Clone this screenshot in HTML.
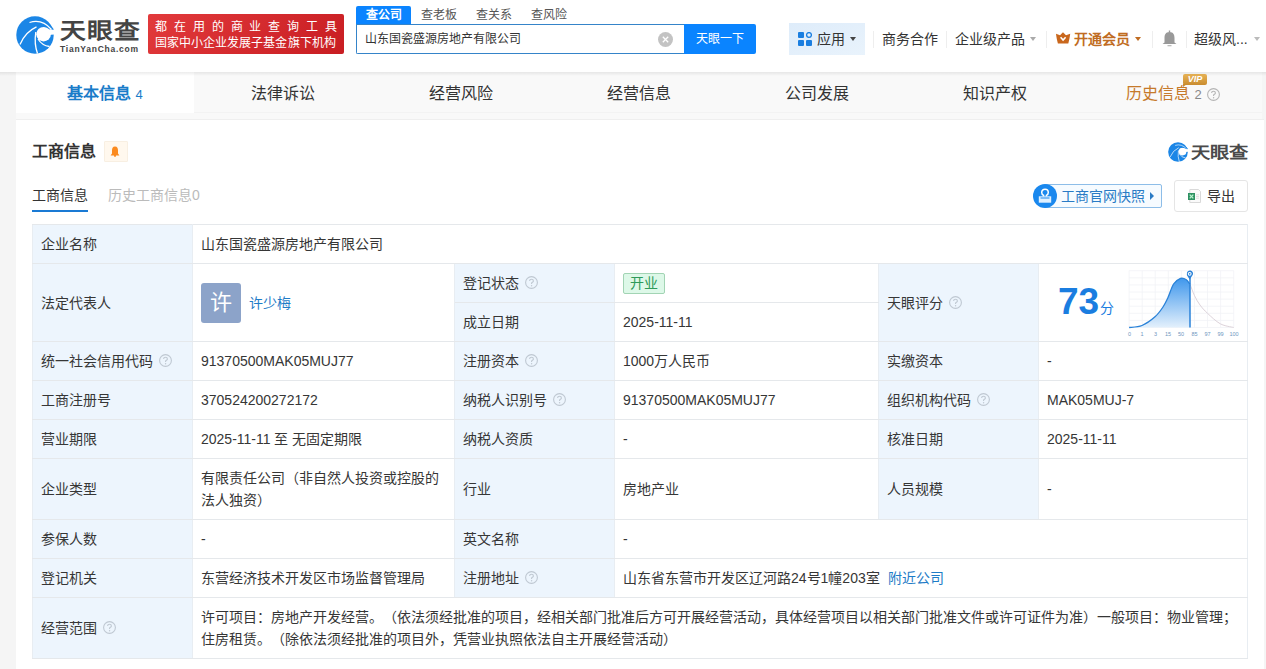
<!DOCTYPE html>
<html lang="zh-CN"><head><meta charset="utf-8">
<style>
*{margin:0;padding:0;box-sizing:border-box}
html,body{text-spacing-trim:space-all;width:1266px;height:669px;overflow:hidden;background:#f5f5f5;font-family:"Liberation Sans",sans-serif;color:#333}
.a{position:absolute;white-space:nowrap}
#hdr{position:absolute;left:0;top:0;width:1266px;height:72px;background:#fff}
#tabs{position:absolute;left:16px;top:72px;width:1246px;height:47px;background:#f9f9f9}
.tab{position:absolute;top:0;height:41px;width:178px;text-align:center;font-size:16px;line-height:44px;color:#333;overflow:hidden}
#card{position:absolute;left:16px;top:119px;width:1248px;height:560px;background:#fff;border-top:1px solid #efefef}
table{position:absolute;left:32px;top:224px;border-collapse:collapse;table-layout:fixed}
td{border:1px solid #e5e8eb;border-left-color:#e8edf2;border-right-color:#e8edf2;font-size:14px;color:#363636;padding:0 8px;vertical-align:middle;height:39px;line-height:22px}
td.l{background:#edf5fd}
.q{display:inline-block;width:13px;height:13px;vertical-align:-1px;margin-left:6px}
.sep{position:absolute;top:31px;width:1px;height:17px;background:#eee}
.caret{position:absolute;width:0;height:0;border-left:3.5px solid transparent;border-right:3.5px solid transparent;border-top:4px solid #555}
</style></head><body>
<svg width="0" height="0" style="position:absolute"><defs><g id="logo">
  <circle cx="19" cy="19" r="18.7" fill="#1b86e6"/>
  <circle cx="27.6" cy="18.2" r="7.3" fill="#fff"/>
  <path d="M30 14 L39 12.5 L39 18.5 L32 19 Z" fill="#fff"/>
  <path d="M22 11.5 Q30 9 36 13.8 L38 13.5 Q33 6 24 7.5 Z" fill="#1b86e6"/>
  <path d="M13.5 6.5 Q26 2.5 35.5 13.5" stroke="#fff" stroke-width="1.2" fill="none"/>
  <path d="M4 28.5 Q9 16 20.5 10.8" stroke="#fff" stroke-width="1.3" fill="none"/>
  <path d="M19.8 16 Q18 28 21.5 37.5" stroke="#fff" stroke-width="1.3" fill="none"/>
  <path d="M22 23 Q26 29.5 33.5 30.5" stroke="#fff" stroke-width="1.3" fill="none"/>
</g></defs></svg>
<div id="hdr">
  <svg class="a" style="left:16px;top:16px" width="38" height="38" viewBox="0 0 38 38"><use href="#logo"/></svg>
  <div class="a" style="left:59.5px;top:17.5px;font-size:22px;line-height:26px;font-weight:bold;color:#444;letter-spacing:1px;transform:scaleX(1.17);transform-origin:0 0">天眼查</div>
  <div class="a" style="left:60px;top:44px;font-size:8.5px;line-height:11px;font-weight:bold;color:#444;letter-spacing:0.75px">TianYanCha.com</div>
  <div class="a" style="left:148px;top:14px;width:196px;height:40px;border-radius:2px;background:linear-gradient(135deg,#e23a3c,#c81d22)">
    <div class="a" style="left:7px;top:4.5px;font-size:12px;line-height:16px;color:#fff;font-weight:500;letter-spacing:6.9px">都在用的商业查询工具</div>
    <div class="a" style="left:7px;top:21px;font-size:12px;line-height:16px;color:#fff;font-weight:500;letter-spacing:0.05px">国家中小企业发展子基金旗下机构</div>
  </div>
  <div class="a" style="left:356px;top:6px;width:55px;height:18px;background:#0a84ff;border-radius:2px 2px 0 0;color:#fff;font-size:12px;font-weight:bold;line-height:18px;text-align:center">查公司</div>
  <div class="a" style="left:421px;top:6px;font-size:12px;line-height:18px;color:#555">查老板</div>
  <div class="a" style="left:476px;top:6px;font-size:12px;line-height:18px;color:#555">查关系</div>
  <div class="a" style="left:531px;top:6px;font-size:12px;line-height:18px;color:#555">查风险</div>
  <div class="a" style="left:356px;top:24px;width:330px;height:30px;border:1px solid #3584c9;border-right:none;border-radius:0 0 0 2px;background:#fff"></div>
  <div class="a" style="left:365px;top:30px;font-size:12px;line-height:18px;color:#333">山东国瓷盛源房地产有限公司</div>
  <div class="a" style="left:657.5px;top:31.5px;width:15px;height:15px;border-radius:50%;background:#c3c3c3"></div>
  <svg class="a" style="left:657.5px;top:31.5px" width="15" height="15"><path d="M4.8 4.8L10.2 10.2M10.2 4.8L4.8 10.2" stroke="#fff" stroke-width="1.3"/></svg>
  <div class="a" style="left:684px;top:24px;width:72px;height:30px;background:#0a84ff;border-radius:0 2px 2px 0;color:#fff;font-size:12px;line-height:30px;text-align:center">天眼一下</div>

  <div class="a" style="left:789px;top:23px;width:76px;height:32px;background:linear-gradient(160deg,#deecfa,#e9f3fc)"></div>
  <svg class="a" style="left:798px;top:32px" width="14" height="14" viewBox="0 0 14 14">
    <rect x="0" y="0" width="6" height="6" rx="1" fill="#1a7ee0"/>
    <circle cx="11" cy="3" r="2.4" fill="none" stroke="#1a7ee0" stroke-width="1.3"/>
    <rect x="0" y="8" width="6" height="6" rx="1" fill="#1a7ee0"/>
    <rect x="8" y="8" width="6" height="6" rx="1" fill="#1a7ee0"/>
  </svg>
  <div class="a" style="left:817px;top:30px;font-size:14px;line-height:18px;color:#333">应用</div>
  <div class="caret" style="left:850px;top:37px;border-top-color:#444"></div>
  <div class="sep" style="left:873px"></div>
  <div class="a" style="left:882px;top:30px;font-size:14px;line-height:18px;color:#333">商务合作</div>
  <div class="sep" style="left:946px"></div>
  <div class="a" style="left:955px;top:30px;font-size:14px;line-height:18px;color:#333">企业级产品</div>
  <div class="caret" style="left:1030px;top:37px;border-top-color:#aaa"></div>
  <div class="sep" style="left:1046px"></div>
  <svg class="a" style="left:1056px;top:32px" width="15" height="12" viewBox="0 0 15 12">
    <path d="M7 0.3 L10 3.2 L14.2 1.8 C13.8 5 13.2 8.5 12.3 11.5 L1.9 11.5 C1 8.5 0.4 5 0 1.8 L4 3.2 Z" fill="#c9671c"/>
    <path d="M4.6 5.3 L7.1 8 L9.6 5.3" stroke="#fff" stroke-width="1.6" fill="none"/>
  </svg>
  <div class="a" style="left:1074px;top:30px;font-size:14px;line-height:18px;color:#c06c22;font-weight:bold">开通会员</div>
  <div class="caret" style="left:1135px;top:37px;border-top-color:#c06c22"></div>
  <div class="sep" style="left:1152px"></div>
  <svg class="a" style="left:1162px;top:30px" width="15" height="17" viewBox="0 0 15 17">
    <rect x="6.8" y="0.5" width="1.4" height="2" fill="#999"/>
    <path d="M7.5 2 C3.5 2 2.5 5 2.5 8 L2.5 12.5 L0.5 14 L14.5 14 L12.5 12.5 L12.5 8 C12.5 5 11.5 2 7.5 2 Z" fill="#999"/>
    <rect x="5.5" y="15" width="4" height="1.3" fill="#bbb"/>
  </svg>
  <div class="sep" style="left:1186px"></div>
  <div class="a" style="left:1194px;top:30px;font-size:14px;line-height:18px;color:#333">超级风...</div>
  <div class="caret" style="left:1254px;top:37px;border-top-color:#bbb"></div>
</div>

<div id="tabs">
  <div class="a" style="left:0;top:40px;width:1246px;height:1px;background:#f3f3f3"></div>
  <div class="tab" style="left:0;background:#fff;color:#1a7cc9;font-weight:bold">基本信息 <span style="font-size:13px;font-weight:normal">4</span></div>
  <div class="tab" style="left:178px">法律诉讼</div>
  <div class="tab" style="left:356px">经营风险</div>
  <div class="tab" style="left:534px">经营信息</div>
  <div class="tab" style="left:712px">公司发展</div>
  <div class="tab" style="left:890px">知识产权</div>
  <div class="tab" style="left:1068px;color:#c67a2b">历史信息 <span style="font-size:13px;color:#888">2</span> <svg class="q" style="margin-left:1px;vertical-align:-2px" viewBox="0 0 13 13"><circle cx="6.5" cy="6.5" r="5.9" fill="none" stroke="#b5b5b5" stroke-width="1.1"/><path d="M4.6 5.1 C4.6 3.9 5.4 3.2 6.5 3.2 C7.6 3.2 8.4 3.9 8.4 4.9 C8.4 6 7.2 6.2 6.6 7 L6.6 8" fill="none" stroke="#b5b5b5" stroke-width="1.1"/><circle cx="6.6" cy="9.7" r="0.7" fill="#b5b5b5"/></svg></div>
  <div class="a" style="left:1167px;top:2px;width:24px;height:11px;border-radius:2px;background:linear-gradient(180deg,#e9b456,#c98c30);color:#fff;font-size:9px;line-height:11px;font-weight:bold;font-style:italic;text-align:center">VIP</div>
  <div class="a" style="left:1167px;top:12px;width:0;height:0;border-top:3px solid #c98c30;border-right:4px solid transparent"></div>
</div>
<div id="card"></div>
<div class="a" style="left:0;top:72px;width:1266px;height:4px;background:linear-gradient(rgba(0,0,0,.075),rgba(0,0,0,0))"></div>

<div class="a" style="left:32px;top:141px;font-size:16px;line-height:22px;font-weight:bold;color:#333">工商信息</div>
<div class="a" style="left:104px;top:141px;width:24px;height:21px;background:#fff8ee;border:1px solid #f8efe2;border-radius:1px"></div>
<svg class="a" style="left:110px;top:145.5px" width="10" height="11" viewBox="0 0 10 11">
  <path d="M5 0.6 C2.6 0.6 2 2.6 2 4.6 L2 7.6 L0.6 9.4 L9.4 9.4 L8 7.6 L8 4.6 C8 2.6 7.4 0.6 5 0.6Z" fill="#fb8a1e"/>
  <circle cx="5" cy="9.8" r="1.1" fill="#fb8a1e"/>
</svg>
<svg class="a" style="left:1168px;top:142px" width="20" height="20" viewBox="0 0 38 38"><use href="#logo"/></svg>
<div class="a" style="left:1190.5px;top:142px;font-size:16px;line-height:22px;font-weight:bold;color:#4a4a4a;letter-spacing:0px;transform:scaleX(1.2);transform-origin:0 0">天眼查</div>

<div class="a" style="left:32px;top:185px;font-size:14px;line-height:20px;color:#333">工商信息</div>
<div class="a" style="left:32px;top:210px;width:56px;height:2px;background:#1a7ad4"></div>
<div class="a" style="left:108px;top:185px;font-size:14px;line-height:20px;color:#bbb">历史工商信息0</div>

<div class="a" style="left:1045px;top:184px;width:117px;height:24px;border:1px solid #8dbde8;background:#f6fbff;border-radius:0 2px 2px 0"></div>
<div class="a" style="left:1033px;top:184px;width:24px;height:24px;border-radius:50%;background:#1a88ee"></div>
<svg class="a" style="left:1037px;top:188px" width="16" height="16" viewBox="0 0 16 16">
  <path d="M6.6 8.5 L6.6 7.3 C5.3 6.6 4.7 5.6 4.7 4.4 C4.7 2.5 6.1 1.2 8 1.2 C9.9 1.2 11.3 2.5 11.3 4.4 C11.3 5.6 10.7 6.6 9.4 7.3 L9.4 8.5" fill="none" stroke="#fff" stroke-width="1.5"/>
  <rect x="1.8" y="8.3" width="12.4" height="6.4" fill="#dff0ff"/>
  <path d="M3.5 10 H12.5" stroke="#1a88ee" stroke-width="1"/>
</svg>
<div class="a" style="left:1061px;top:186px;font-size:14px;line-height:20px;color:#2a7bc5">工商官网快照</div>
<div class="a" style="left:1149.5px;top:192px;width:0;height:0;border-top:4px solid transparent;border-bottom:4px solid transparent;border-left:4px solid #2a7bc5"></div>

<div class="a" style="left:1174px;top:180px;width:74px;height:32px;border:1px solid #e5e5e5;border-radius:3px;background:#fff"></div>
<svg class="a" style="left:1187px;top:189px" width="15" height="15" viewBox="0 0 15 15">
  <path d="M2.8 0.5 L11.5 0.5 L13.5 2.5 L13.5 13.5 L2.8 13.5 Z" fill="#fafafa" stroke="#d9d9d9" stroke-width="1"/>
  <path d="M9 5.8 H12 M9 7.5 H12 M9 9.2 H12" stroke="#e0e0e0" stroke-width="1"/>
  <rect x="1" y="4" width="7" height="7" fill="#2e9162"/>
  <path d="M2.7 5.6 L6.3 9.4 M6.3 5.6 L2.7 9.4" stroke="#b8f3cf" stroke-width="1.3"/>
</svg>
<div class="a" style="left:1207px;top:186px;font-size:14px;line-height:20px;color:#333">导出</div>

<table>
<colgroup><col style="width:160px"><col style="width:262px"><col style="width:160px"><col style="width:264px"><col style="width:160px"><col style="width:209px"></colgroup>
<tr><td class="l">企业名称</td><td colspan="5">山东国瓷盛源房地产有限公司</td></tr>
<tr><td class="l" rowspan="2" style="height:78px">法定代表人</td><td rowspan="2"><span style="display:inline-block;width:40px;height:40px;border-radius:3px;background:#8ca3c9;color:#fff;font-size:22px;line-height:40px;text-align:center;vertical-align:middle">许</span><span style="color:#1f7cc7;margin-left:8px;vertical-align:middle">许少梅</span></td><td class="l">登记状态<svg class="q" viewBox="0 0 13 13"><circle cx="6.5" cy="6.5" r="5.9" fill="none" stroke="#bfc8d2" stroke-width="1.1"/><path d="M4.6 5.1 C4.6 3.9 5.4 3.2 6.5 3.2 C7.6 3.2 8.4 3.9 8.4 4.9 C8.4 6 7.2 6.2 6.6 7 L6.6 8" fill="none" stroke="#bfc8d2" stroke-width="1.1"/><circle cx="6.6" cy="9.7" r="0.7" fill="#bfc8d2"/></svg></td><td><span style="display:inline-block;height:21px;padding:0 6px;border:1px solid #a2d4b4;background:#ddf8e8;color:#2f9a5a;border-radius:2px;line-height:19px">开业</span></td><td class="l" rowspan="2">天眼评分<svg class="q" viewBox="0 0 13 13"><circle cx="6.5" cy="6.5" r="5.9" fill="none" stroke="#bfc8d2" stroke-width="1.1"/><path d="M4.6 5.1 C4.6 3.9 5.4 3.2 6.5 3.2 C7.6 3.2 8.4 3.9 8.4 4.9 C8.4 6 7.2 6.2 6.6 7 L6.6 8" fill="none" stroke="#bfc8d2" stroke-width="1.1"/><circle cx="6.6" cy="9.7" r="0.7" fill="#bfc8d2"/></svg></td><td rowspan="2"></td></tr>
<tr><td class="l">成立日期</td><td>2025-11-11</td></tr>
<tr><td class="l">统一社会信用代码<svg class="q" viewBox="0 0 13 13"><circle cx="6.5" cy="6.5" r="5.9" fill="none" stroke="#bfc8d2" stroke-width="1.1"/><path d="M4.6 5.1 C4.6 3.9 5.4 3.2 6.5 3.2 C7.6 3.2 8.4 3.9 8.4 4.9 C8.4 6 7.2 6.2 6.6 7 L6.6 8" fill="none" stroke="#bfc8d2" stroke-width="1.1"/><circle cx="6.6" cy="9.7" r="0.7" fill="#bfc8d2"/></svg></td><td>91370500MAK05MUJ77</td><td class="l">注册资本<svg class="q" viewBox="0 0 13 13"><circle cx="6.5" cy="6.5" r="5.9" fill="none" stroke="#bfc8d2" stroke-width="1.1"/><path d="M4.6 5.1 C4.6 3.9 5.4 3.2 6.5 3.2 C7.6 3.2 8.4 3.9 8.4 4.9 C8.4 6 7.2 6.2 6.6 7 L6.6 8" fill="none" stroke="#bfc8d2" stroke-width="1.1"/><circle cx="6.6" cy="9.7" r="0.7" fill="#bfc8d2"/></svg></td><td>1000万人民币</td><td class="l">实缴资本</td><td>-</td></tr>
<tr><td class="l">工商注册号</td><td>370524200272172</td><td class="l">纳税人识别号<svg class="q" viewBox="0 0 13 13"><circle cx="6.5" cy="6.5" r="5.9" fill="none" stroke="#bfc8d2" stroke-width="1.1"/><path d="M4.6 5.1 C4.6 3.9 5.4 3.2 6.5 3.2 C7.6 3.2 8.4 3.9 8.4 4.9 C8.4 6 7.2 6.2 6.6 7 L6.6 8" fill="none" stroke="#bfc8d2" stroke-width="1.1"/><circle cx="6.6" cy="9.7" r="0.7" fill="#bfc8d2"/></svg></td><td>91370500MAK05MUJ77</td><td class="l">组织机构代码<svg class="q" viewBox="0 0 13 13"><circle cx="6.5" cy="6.5" r="5.9" fill="none" stroke="#bfc8d2" stroke-width="1.1"/><path d="M4.6 5.1 C4.6 3.9 5.4 3.2 6.5 3.2 C7.6 3.2 8.4 3.9 8.4 4.9 C8.4 6 7.2 6.2 6.6 7 L6.6 8" fill="none" stroke="#bfc8d2" stroke-width="1.1"/><circle cx="6.6" cy="9.7" r="0.7" fill="#bfc8d2"/></svg></td><td>MAK05MUJ-7</td></tr>
<tr><td class="l">营业期限</td><td>2025-11-11 至 无固定期限</td><td class="l">纳税人资质</td><td>-</td><td class="l">核准日期</td><td>2025-11-11</td></tr>
<tr><td class="l" style="height:61px">企业类型</td><td>有限责任公司（非自然人投资或控股的法人独资）</td><td class="l">行业</td><td>房地产业</td><td class="l">人员规模</td><td>-</td></tr>
<tr><td class="l">参保人数</td><td>-</td><td class="l">英文名称</td><td colspan="3">-</td></tr>
<tr><td class="l">登记机关</td><td>东营经济技术开发区市场监督管理局</td><td class="l">注册地址<svg class="q" viewBox="0 0 13 13"><circle cx="6.5" cy="6.5" r="5.9" fill="none" stroke="#bfc8d2" stroke-width="1.1"/><path d="M4.6 5.1 C4.6 3.9 5.4 3.2 6.5 3.2 C7.6 3.2 8.4 3.9 8.4 4.9 C8.4 6 7.2 6.2 6.6 7 L6.6 8" fill="none" stroke="#bfc8d2" stroke-width="1.1"/><circle cx="6.6" cy="9.7" r="0.7" fill="#bfc8d2"/></svg></td><td colspan="3">山东省东营市开发区辽河路24号1幢203室<span style="color:#1f7cc7;margin-left:8px">附近公司</span></td></tr>
<tr><td class="l" style="height:61px">经营范围<svg class="q" viewBox="0 0 13 13"><circle cx="6.5" cy="6.5" r="5.9" fill="none" stroke="#bfc8d2" stroke-width="1.1"/><path d="M4.6 5.1 C4.6 3.9 5.4 3.2 6.5 3.2 C7.6 3.2 8.4 3.9 8.4 4.9 C8.4 6 7.2 6.2 6.6 7 L6.6 8" fill="none" stroke="#bfc8d2" stroke-width="1.1"/><circle cx="6.6" cy="9.7" r="0.7" fill="#bfc8d2"/></svg></td><td colspan="5">许可项目：房地产开发经营。（依法须经批准的项目，经相关部门批准后方可开展经营活动，具体经营项目以相关部门批准文件或许可证件为准）一般项目：物业管理；住房租赁。（除依法须经批准的项目外，凭营业执照依法自主开展经营活动）</td></tr>
</table>
<div class="a" style="left:1058px;top:281px;font-size:37px;line-height:42px;font-weight:bold;color:#1a7de0">73</div>
<div class="a" style="left:1100px;top:298px;font-size:14px;line-height:20px;color:#1a7de0">分</div>
<svg class="a" style="left:1120px;top:262px" width="125" height="78" viewBox="0 0 125 78">
  <defs><linearGradient id="g" x1="0" y1="0" x2="0" y2="1"><stop offset="0" stop-color="#3f97ec"/><stop offset="1" stop-color="#e3f0fc"/></linearGradient></defs>
  <path d="M9.1 8.7V65.5M22.2 8.7V65.5M35.2 8.7V65.5M48.3 8.7V65.5M61.4 8.7V65.5M74.5 8.7V65.5M87.5 8.7V65.5M100.6 8.7V65.5M113.7 8.7V65.5M9.1 8.7H113.7M9.1 15.8H113.7M9.1 22.9H113.7M9.1 30.0H113.7M9.1 37.1H113.7M9.1 44.2H113.7M9.1 51.3H113.7M9.1 58.4H113.7M9.1 65.5H113.7" stroke="#f1f3f6" stroke-width="0.8" fill="none"/>
  <path d="M9.1 65.5 C11.2 65.2 17.7 65.3 22.0 63.5 C26.3 61.7 31.5 57.9 35.0 54.8 C38.5 51.7 40.9 48.1 43.0 45.0 C45.1 41.9 46.0 39.8 47.8 36.0 C49.6 32.2 51.5 25.3 53.6 22.0 C55.7 18.7 58.5 17.1 60.6 16.3 C62.7 15.6 64.4 16.5 66.0 17.5 C67.6 18.5 69.3 21.4 70.0 22.2 L70 65.5 Z" fill="url(#g)"/>
  <path d="M9.1 65.5 C11.2 65.2 17.7 65.3 22.0 63.5 C26.3 61.7 31.5 57.9 35.0 54.8 C38.5 51.7 40.9 48.1 43.0 45.0 C45.1 41.9 46.0 39.8 47.8 36.0 C49.6 32.2 51.5 25.3 53.6 22.0 C55.7 18.7 58.5 17.1 60.6 16.3 C62.7 15.6 64.4 16.5 66.0 17.5 C67.6 18.5 69.3 21.4 70.0 22.2" fill="none" stroke="#2a82d8" stroke-width="1.3"/>
  <path d="M70.0 22.2 C70.8 24.1 72.9 30.3 74.6 33.8 C76.3 37.3 77.8 40.1 80.0 43.0 C82.2 45.9 84.1 48.2 87.5 51.3 C90.9 54.4 95.9 59.4 100.3 61.8 C104.7 64.2 111.5 64.9 113.7 65.5" fill="none" stroke="#ddd3da" stroke-width="1"/>
  <path d="M70 15 V65.5" stroke="#2a82d8" stroke-width="1.5"/>
  <path d="M66.9 12 A3.1 3.1 0 1 1 72.5 13.3 L69.7 17.5 L66.9 13.3 Z" fill="#2a82d8"/>
  <circle cx="69.7" cy="11.8" r="1.9" fill="#fff"/>
  <circle cx="69.7" cy="11.8" r="0.9" fill="#2a82d8"/>
  <g font-size="5.5" fill="#7096c0" font-family="Liberation Sans" text-anchor="middle"><text x="9.5" y="73.5">0</text><text x="22" y="73.5">1</text><text x="35.5" y="73.5">3</text><text x="48" y="73.5">15</text><text x="61" y="73.5">50</text><text x="74.5" y="73.5">85</text><text x="87.5" y="73.5">97</text><text x="100.5" y="73.5">99</text><text x="114" y="73.5">100</text></g>
</svg>

</body></html>
